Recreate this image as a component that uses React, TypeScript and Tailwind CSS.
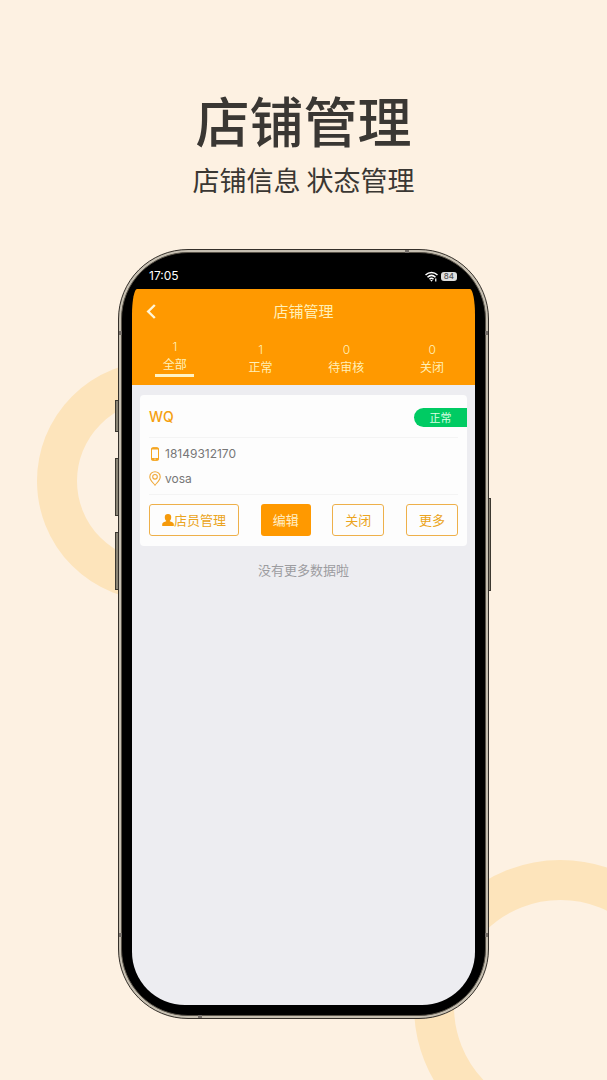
import React, { useState } from 'react';

interface StatusTab {
  label: string;
  count: number;
}

interface Store {
  name: string;
  status: string;
  phone: string;
  address: string;
}

const tabs: StatusTab[] = [
  { label: '全部', count: 1 },
  { label: '正常', count: 1 },
  { label: '待审核', count: 0 },
  { label: '关闭', count: 0 },
];

const stores: Store[] = [
  { name: 'WQ', status: '正常', phone: '18149312170', address: 'vosa' },
];

function WifiIcon() {
  return (
    <svg width="13" height="11" viewBox="0 0 26 22" fill="none" stroke="#fff" strokeWidth="3">
      <path d="M1 8C8 1 18 1 25 8" />
      <path d="M5 12.500C10 7.800 16 7.800 21 12.500" />
      <path d="M9 16.500C11.400 14 14.600 14 17 16.500" />
      <path d="M10.500 18h5L13 21.500z" fill="#fff" stroke="none" />
      <path d="M21.500 15v6" strokeWidth="2.5" />
    </svg>
  );
}

function PhoneIcon() {
  return (
    <svg width="12" height="14" viewBox="0 0 12 14" fill="none">
      <rect x="2.500" y="0.600" width="7" height="12.800" rx="1.200" stroke="#f5a623" />
      <path d="M2.500 1h7v1.600h-7zM2.500 11h7v2.200h-7z" fill="#f5a623" />
      <circle cx="6" cy="12.100" r="0.600" fill="#fff" />
    </svg>
  );
}

function PinIcon() {
  return (
    <svg width="12" height="15" viewBox="0 0 12 15" fill="none" stroke="#f0a93a" strokeWidth="1.1">
      <path d="M6 14.200C4 11.600.8 9 .8 5.900a5.200 5.200 0 0 1 10.400 0c0 3.100-3.200 5.700-5.200 8.300z" />
      <circle cx="6" cy="5.800" r="2.300" />
    </svg>
  );
}

function UserIcon() {
  return (
    <svg width="12" height="12" viewBox="0 0 12 12" fill="#f59a0c">
      <path d="M6 0a3.200 3.200 0 0 1 3.200 3.400c0 1.400-.6 2.600-1.400 3.300v.6c1.700.6 3.800 1.200 4 2.600V12H.2V9.900c.2-1.400 2.300-2 4-2.600v-.6C3.400 6 2.800 4.800 2.800 3.400A3.200 3.200 0 0 1 6 0z" />
    </svg>
  );
}

function StatusBar() {
  return (
    <div className="flex h-[26px] items-center justify-between pr-[18px] pl-[17px] text-white">
      <span className="font-['Inter','Liberation_Sans',sans-serif] text-[12px] leading-4">17:05</span>
      <div className="flex items-center gap-[3px]">
        <WifiIcon />
        <span className="flex h-[9px] items-center rounded-[3px] bg-[#dedede] px-[3px] font-['Inter',sans-serif] text-[8px] leading-none font-medium text-[#555]">
          84
        </span>
      </div>
    </div>
  );
}

function StoreCard({ store }: { store: Store }) {
  return (
    <article className="rounded-sm bg-[#fdfdfd] pb-[10px]">
      <div className="flex h-[42px] items-center justify-between pt-[2px] pl-[9px]">
        <h3 className="font-['Inter','Liberation_Sans',sans-serif] text-[14px] leading-5 font-medium text-[#f5a010]">
          {store.name}
        </h3>
        <span className="flex h-[19px] w-[53px] items-center justify-center rounded-l-full bg-[#00cb63] text-[11px] leading-4 text-[#d9ffe4]">
          {store.status}
        </span>
      </div>
      <div className="mx-[9px] flex flex-col border-y border-[#f4f4f4] py-[3px] font-['Inter','Liberation_Sans',sans-serif] text-[12px] text-[#777]">
        <div className="flex h-[25px] items-center gap-1">
          <PhoneIcon />
          <span>{store.phone}</span>
        </div>
        <div className="flex h-[25px] items-center gap-1">
          <PinIcon />
          <span>{store.address}</span>
        </div>
      </div>
      <div className="mx-[9px] mt-[9px] flex items-center justify-between text-[13px] leading-5 text-[#eba420]">
        <button type="button" className="flex h-8 items-center rounded-[3px] border border-[#eeb04a] px-3">
          <UserIcon />
          店员管理
        </button>
        <button type="button" className="h-8 rounded-[3px] bg-[#ff9900] px-3 text-[#fff0c8]">
          编辑
        </button>
        <button type="button" className="h-8 rounded-[3px] border border-[#eeb04a] px-3">
          关闭
        </button>
        <button type="button" className="h-8 rounded-[3px] border border-[#eeb04a] px-3">
          更多
        </button>
      </div>
    </article>
  );
}

function StoreScreen() {
  const [active, setActive] = useState(0);

  return (
    <>
      <header className="rounded-t-[5px_26px] bg-[#ff9900] text-[#fff0b8]">
        <div className="grid h-11 grid-cols-[40px_1fr_40px] items-center">
          <button type="button" aria-label="返回" className="flex h-11 items-center pl-[14px]">
            <svg width="10" height="15" viewBox="0 0 10 15" fill="none" stroke="#fff6d8" strokeWidth="2.4">
              <path d="M8.800 1L2.200 7.500l6.600 6.500" />
            </svg>
          </button>
          <h2 className="text-center text-[15px] leading-5">店铺管理</h2>
        </div>
        <div role="tablist" className="grid h-[52px] grid-cols-4 items-center pb-[3px]">
          {tabs.map((tab, index) => (
            <button
              key={tab.label}
              type="button"
              role="tab"
              aria-selected={active === index}
              onClick={() => setActive(index)}
              className="flex flex-col items-center text-[12px] leading-[17px]"
            >
              <span className="font-['Inter','Liberation_Sans',sans-serif] font-light">{tab.count}</span>
              <span>{tab.label}</span>
              {active === index && <span className="mt-[2px] h-[3px] w-[39px] bg-[#fff3c4]" />}
            </button>
          ))}
        </div>
      </header>
      <div className="flex-1 rounded-b-[53px] bg-[#ededf1] px-2 pt-[10px]">
        {stores.map((store) => (
          <StoreCard key={store.name} store={store} />
        ))}
        <p className="pt-[14px] text-center text-[13px] leading-5 text-[#9c9ca0]">没有更多数据啦</p>
      </div>
    </>
  );
}

// Phone body with its metal rim and side keys
function PhoneFrame({ children }: { children: React.ReactNode }) {
  return (
    <div className="relative flex flex-1 flex-col">
      <span className="absolute top-[151px] -left-[3px] h-8 w-1 border border-[#3c3830] bg-[#8b8576]" />
      <span className="absolute top-[209px] -left-[3px] h-[58px] w-1 border border-[#3c3830] bg-[#8b8576]" />
      <span className="absolute top-[283px] -left-[3px] h-[58px] w-1 border border-[#3c3830] bg-[#8b8576]" />
      <span className="absolute top-[249px] -right-[2px] h-[93px] w-1 border border-[#3c3830] bg-[#8b8576]" />
      <div className="relative flex flex-1 flex-col rounded-[70px] border border-[#35302a] bg-[#c6bfb1] p-[2px]">
        <div className="flex flex-1 flex-col rounded-[67px] border border-[#5a544a] bg-black p-[10px]">
          {children}
        </div>
        <span className="absolute top-[81px] left-0 h-1 w-[3px] bg-[#76706a]" />
        <span className="absolute top-[81px] right-0 h-1 w-[3px] bg-[#76706a]" />
        <span className="absolute bottom-[81px] left-0 h-1 w-[3px] bg-[#76706a]" />
        <span className="absolute right-0 bottom-[81px] h-1 w-[3px] bg-[#76706a]" />
        <span className="absolute top-0 right-[79px] h-[3px] w-1 bg-[#76706a]" />
        <span className="absolute bottom-0 left-[79px] h-[3px] w-1 bg-[#76706a]" />
      </div>
    </div>
  );
}

export default function App() {
  return (
    <main className="relative flex min-h-screen flex-col overflow-hidden bg-[#fdf1e2] px-[118px] pt-[86px] pb-[61px] font-['Noto_Sans_CJK_SC',sans-serif]">
      <span className="absolute top-[361px] left-[37px] size-[240px] rounded-full border-[40px] border-[#fde4bb]" />
      <span className="absolute top-[860px] -right-[100px] size-[293px] rounded-full border-[40px] border-[#fde4bb]" />
      <div className="relative pb-[51px] text-center whitespace-nowrap text-[#3a3733]">
        <h1 className="text-[54px] leading-[68px] font-medium">店铺管理</h1>
        <p className="mt-[8px] text-[27px] leading-9">店铺信息 状态管理</p>
      </div>
      <PhoneFrame>
        <StatusBar />
        <StoreScreen />
      </PhoneFrame>
    </main>
  );
}
